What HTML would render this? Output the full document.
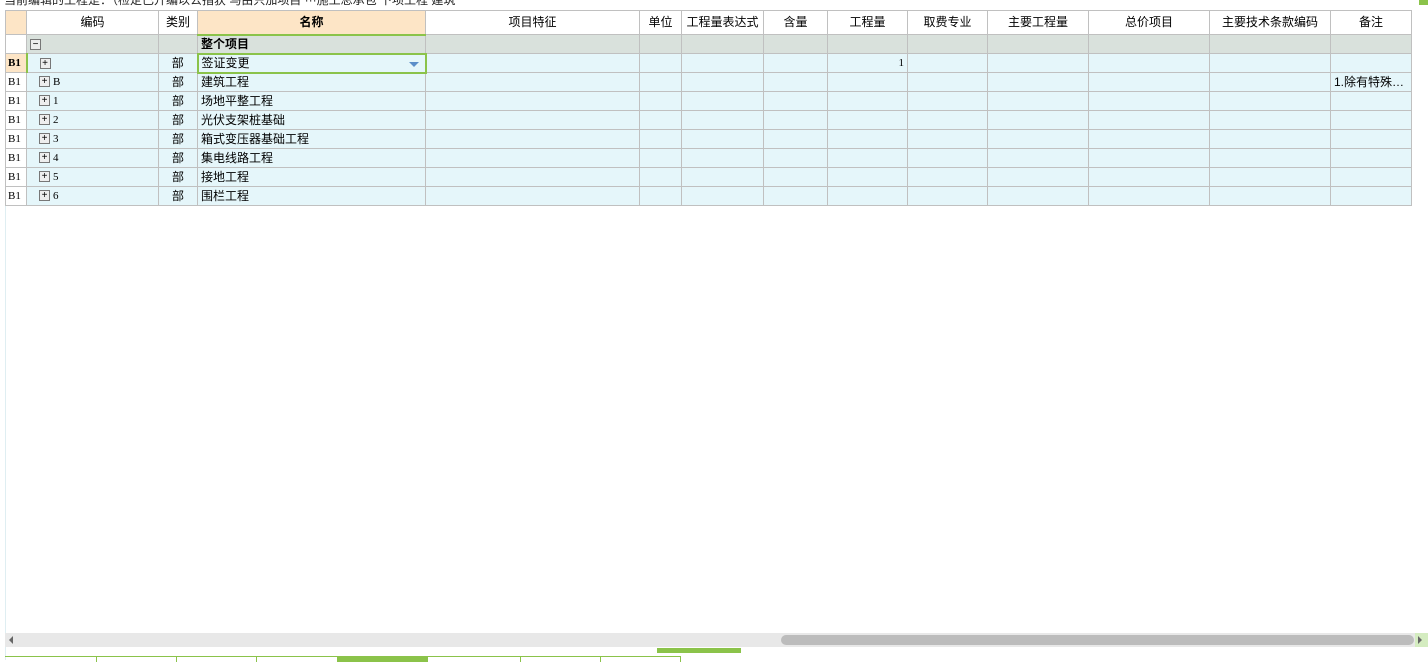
<!DOCTYPE html>
<html><head><meta charset="utf-8"><style>
*{margin:0;padding:0;box-sizing:border-box}
body{width:1428px;height:662px;background:#fff;position:relative;overflow:hidden;font-family:"Liberation Sans","Noto Sans CJK SC",sans-serif;font-size:12px;color:#000}
.topt{position:absolute;left:4px;top:-9px;font-size:12px;color:#222;white-space:nowrap}
table{position:absolute;left:5px;top:10px;border-collapse:collapse;table-layout:fixed}
td{border:1px solid #c0c0c0;height:19px;padding:0 3px;white-space:nowrap;overflow:hidden;font-size:12px;line-height:17px}
tr.h td{height:24px;background:#fff;text-align:center;font-size:12px}
tr.h td.sel{background:#fde5c6;font-weight:bold}
tr.h td.c0{background:#fde5c6}
tr.g td{background:#d9e1dc}
tr.r td{background:#e5f6fa}
td.n{background:#fff!important;font-family:"Liberation Serif",serif;font-size:11px;padding:0 2px}
td.k{font-family:"Liberation Serif",serif;font-size:11px}
.bx{display:inline-block;width:11px;height:11px;border:1px solid #777;background:#eee;font-family:"Liberation Sans",sans-serif;font-size:10px;line-height:9px;text-align:center;vertical-align:middle;margin-left:9px;margin-right:3px}
.c{text-align:center}
</style></head><body>
<div class="topt">当前编辑的工程是：（检定已升编以公指获 马由只加项目 ···施工总承包 下项工程 建筑</div>
<div style="position:absolute;left:5px;top:10px;width:1px;height:650px;background:#dfeef2"></div>
<table>
<colgroup><col style="width:21px"><col style="width:132px"><col style="width:39px"><col style="width:228px"><col style="width:214px"><col style="width:42px"><col style="width:82px"><col style="width:64px"><col style="width:80px"><col style="width:80px"><col style="width:101px"><col style="width:121px"><col style="width:121px"><col style="width:81px"></colgroup>
<tr class="h"><td class="c0"></td><td>编码</td><td>类别</td><td class="sel">名称</td><td>项目特征</td><td>单位</td><td>工程量表达式</td><td>含量</td><td>工程量</td><td>取费专业</td><td>主要工程量</td><td>总价项目</td><td>主要技术条款编码</td><td>备注</td></tr>
<tr class="g"><td style="background:#fff"></td><td style="padding:0"><span class="bx" style="margin-left:3px">−</span></td><td></td><td style="font-weight:bold;border-top:2px solid #8bc34a">整个项目</td><td></td><td></td><td></td><td></td><td></td><td></td><td></td><td></td><td></td><td></td></tr>
<tr class="r"><td class="n" style="background:#fde5c6!important;font-weight:bold;border-right:2px solid #8bc34a">B1</td><td><span class="bx">+</span></td><td class="c">部</td><td style="border:2px solid #8bc34a;position:relative;background:#e5f6fa">签证变更<span style="position:absolute;right:6px;top:7px;border-left:5px solid transparent;border-right:5px solid transparent;border-top:5px solid #5b8ec9"></span></td><td></td><td></td><td></td><td></td><td style="text-align:right;font-family:'Liberation Serif';font-size:11px">1</td><td></td><td></td><td></td><td></td><td></td></tr>
<tr class="r"><td class="n">B1</td><td class="k"><span class="bx">+</span>B</td><td class="c">部</td><td>建筑工程</td><td></td><td></td><td></td><td></td><td></td><td></td><td></td><td></td><td></td><td>1.除有特殊…</td></tr>
<tr class="r"><td class="n">B1</td><td class="k"><span class="bx">+</span>1</td><td class="c">部</td><td>场地平整工程</td><td></td><td></td><td></td><td></td><td></td><td></td><td></td><td></td><td></td><td></td></tr>
<tr class="r"><td class="n">B1</td><td class="k"><span class="bx">+</span>2</td><td class="c">部</td><td>光伏支架桩基础</td><td></td><td></td><td></td><td></td><td></td><td></td><td></td><td></td><td></td><td></td></tr>
<tr class="r"><td class="n">B1</td><td class="k"><span class="bx">+</span>3</td><td class="c">部</td><td>箱式变压器基础工程</td><td></td><td></td><td></td><td></td><td></td><td></td><td></td><td></td><td></td><td></td></tr>
<tr class="r"><td class="n">B1</td><td class="k"><span class="bx">+</span>4</td><td class="c">部</td><td>集电线路工程</td><td></td><td></td><td></td><td></td><td></td><td></td><td></td><td></td><td></td><td></td></tr>
<tr class="r"><td class="n">B1</td><td class="k"><span class="bx">+</span>5</td><td class="c">部</td><td>接地工程</td><td></td><td></td><td></td><td></td><td></td><td></td><td></td><td></td><td></td><td></td></tr>
<tr class="r"><td class="n">B1</td><td class="k"><span class="bx">+</span>6</td><td class="c">部</td><td>围栏工程</td><td></td><td></td><td></td><td></td><td></td><td></td><td></td><td></td><td></td><td></td></tr>
</table>
<div style="position:absolute;left:1419px;top:0;width:9px;height:5px;background:#8bc34a"></div>
<div style="position:absolute;left:5px;top:633px;width:1423px;height:14px;background:#e8e8e8"></div>
<div style="position:absolute;left:9px;top:636px;border-top:4px solid transparent;border-bottom:4px solid transparent;border-right:4px solid #666"></div>
<div style="position:absolute;left:781px;top:635px;width:633px;height:10px;border-radius:5px;background:#bcbcbc"></div>
<div style="position:absolute;left:1415px;top:633px;width:13px;height:14px;background:#d4ecc0"></div>
<div style="position:absolute;left:1418px;top:636px;border-top:4px solid transparent;border-bottom:4px solid transparent;border-left:4px solid #666"></div>
<div style="position:absolute;left:657px;top:648px;width:84px;height:5px;background:#8bc34a"></div>
<div style="position:absolute;left:5px;top:656px;width:676px;height:1px;background:#8bc34a"></div>
<div style="position:absolute;left:337px;top:656px;width:91px;height:6px;background:#8bc34a"></div>
<div style="position:absolute;left:96px;top:656px;width:1px;height:6px;background:#8bc34a"></div>
<div style="position:absolute;left:176px;top:656px;width:1px;height:6px;background:#8bc34a"></div>
<div style="position:absolute;left:256px;top:656px;width:1px;height:6px;background:#8bc34a"></div>
<div style="position:absolute;left:520px;top:656px;width:1px;height:6px;background:#8bc34a"></div>
<div style="position:absolute;left:600px;top:656px;width:1px;height:6px;background:#8bc34a"></div>
<div style="position:absolute;left:680px;top:656px;width:1px;height:6px;background:#8bc34a"></div>
</body></html>
